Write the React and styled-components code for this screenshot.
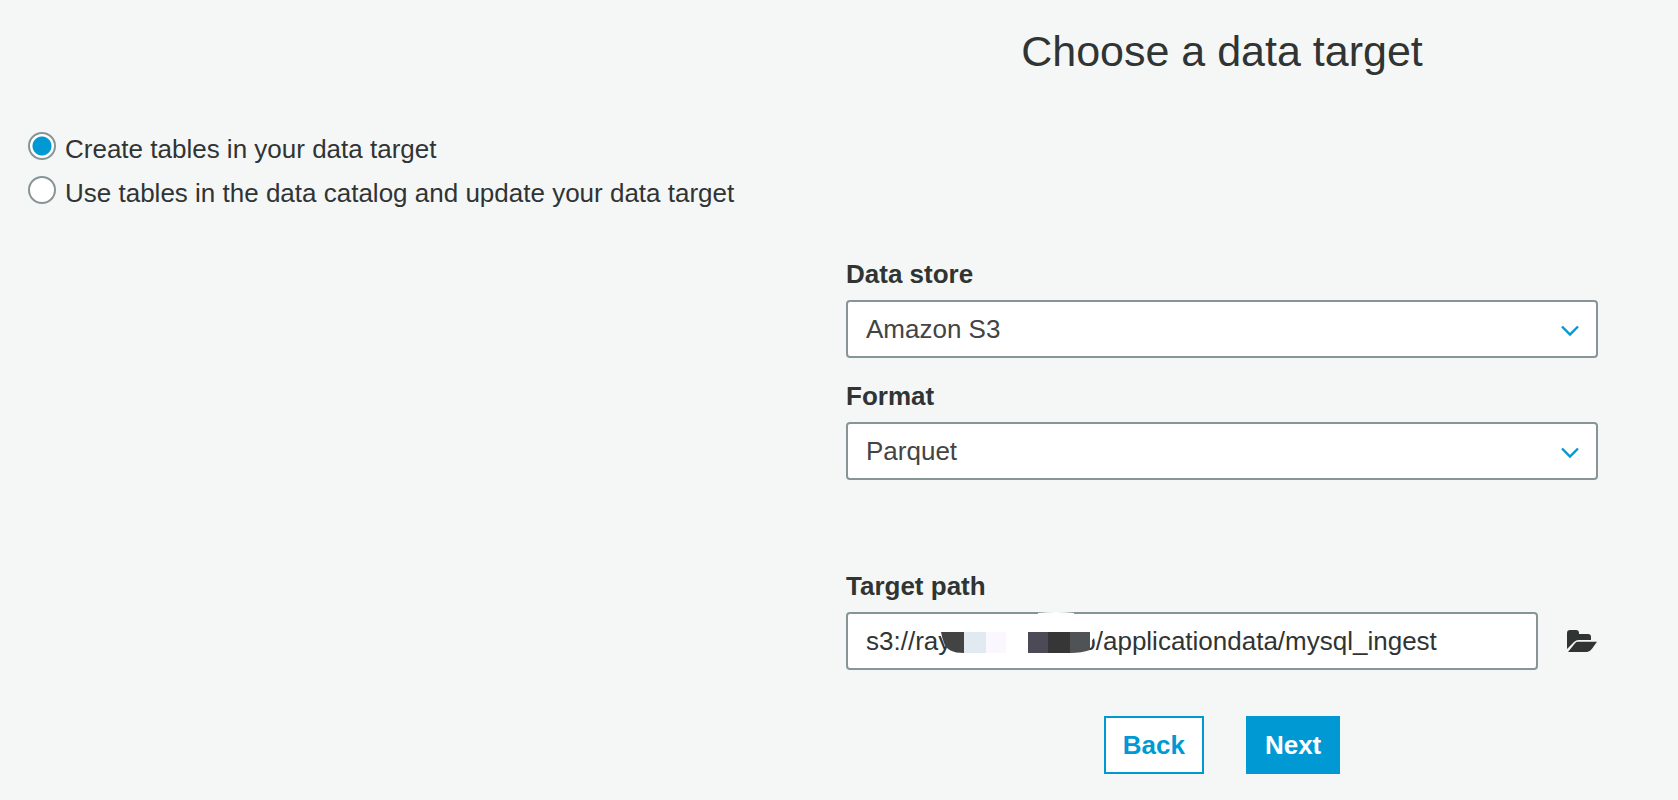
import React, { useState } from "react";
import styled, { createGlobalStyle, css } from "styled-components";

const GlobalStyle = createGlobalStyle`
  * { box-sizing: border-box; }
  body {
    margin: 0;
    background: #f5f7f7;
    color: #303433;
    font-family: "Liberation Sans", Arial, sans-serif;
    font-size: 26px;
    line-height: 32px;
  }
`;

const Page = styled.main`
  display: grid;
  grid-template-columns: minmax(0, 1fr) minmax(0, 1fr);
  column-gap: 80px;
  padding: 25px 80px 25px 14px;
`;

const Title = styled.h1`
  grid-column: 2;
  margin: 0;
  font-size: 43px;
  line-height: 52px;
  font-weight: 400;
  text-align: center;
`;

const Choices = styled.fieldset`
  grid-column: 1 / -1;
  margin: 50px 0 0;
  padding: 0 0 0 14px;
  border: 0;
  min-width: 0;
`;

const Choice = styled.label`
  display: flex;
  align-items: flex-start;
  gap: 9px;
  line-height: 44px;
`;

const Radio = styled.input`
  appearance: none;
  flex: none;
  width: 28px;
  height: 28px;
  margin: 5px 0 0;
  border: 2px solid #879596;
  border-radius: 50%;
  background: #fff;
  &:checked {
    background: radial-gradient(circle, #0099d4 9px, #fff 10px);
  }
`;

const Form = styled.form`
  grid-column: 2;
  display: flex;
  flex-direction: column;
  margin-top: 43px;
`;

const Field = styled.div`
  display: flex;
  flex-direction: column;
  gap: 10px;
  margin-bottom: ${(p) => (p.$spaced ? "90px" : "22px")};
`;

const Label = styled.label`
  font-weight: 700;
`;

const control = css`
  width: 100%;
  height: 58px;
  padding: 0 18px;
  border: 2px solid #879596;
  border-radius: 4px;
  background: #fff;
  font: inherit;
`;

const ControlWrap = styled.div`
  position: relative;
  flex: 1;
  min-width: 0;
  display: flex;
`;

const Select = styled.select`
  ${control}
  appearance: none;
  color: #444;
`;

const TextInput = styled.input`
  ${control}
  color: #303433;
`;

const Chevron = styled.svg`
  position: absolute;
  right: 18px;
  top: 24px;
  pointer-events: none;
`;

const Redaction = styled.svg`
  position: absolute;
  left: 94px;
  top: 0;
  pointer-events: none;
`;

const PathRow = styled.div`
  display: flex;
  align-items: center;
  gap: 28px;
`;

const IconButton = styled.button`
  display: flex;
  padding: 0;
  border: 0;
  background: none;
  color: #303433;
`;

const Actions = styled.div`
  display: flex;
  justify-content: center;
  gap: 42px;
  margin-top: 24px;
`;

const Button = styled.button`
  height: 58px;
  padding: 0 17px;
  border: 2px solid #0099d4;
  background: ${(p) => (p.$primary ? "#0099d4" : "#fff")};
  color: ${(p) => (p.$primary ? "#fff" : "#0099d4")};
  font: inherit;
  font-weight: 700;
`;

const SelectField = ({ id, label, option, spaced }) => (
  <Field $spaced={spaced}>
    <Label htmlFor={id}>{label}</Label>
    <ControlWrap>
      <Select id={id}>
        <option>{option}</option>
      </Select>
      <Chevron width="20" height="14" viewBox="0 0 20 14" aria-hidden="true">
        <path d="M2 2.500l8 8 8-8" fill="none" stroke="#0099d4" strokeWidth="2.4" />
      </Chevron>
    </ControlWrap>
  </Field>
);

const FolderIcon = () => (
  <svg width="32" height="24" viewBox="0 0 32 24" aria-hidden="true" fill="currentColor">
    <path d="M1 20V4q0-3 3-3h6q3 0 3 3v1h9q3 0 3 3v3H12.500q-2.500 0-4.500 2z" />
    <path d="M2 23l7-8.800q1.200-1.400 3-1.400H31l-5 7q-2.200 3.200-5 3.200z" />
  </svg>
);

const pathValue = "s3://ray" + "\u00a0".repeat(18) + "b/applicationdata/mysql_ingest";

export default function App() {
  const [mode, setMode] = useState("create");
  const [path, setPath] = useState(pathValue);
  return (
    <>
      <GlobalStyle />
      <Page>
        <Title>Choose a data target</Title>
        <Choices>
          <Choice>
            <Radio type="radio" name="mode" checked={mode === "create"} onChange={() => setMode("create")} />
            Create tables in your data target
          </Choice>
          <Choice>
            <Radio type="radio" name="mode" checked={mode === "catalog"} onChange={() => setMode("catalog")} />
            Use tables in the data catalog and update your data target
          </Choice>
        </Choices>
        <Form onSubmit={(e) => e.preventDefault()}>
          <SelectField id="store" label="Data store" option="Amazon S3" />
          <SelectField id="format" label="Format" option="Parquet" spaced />
          <Field>
            <Label htmlFor="path">Target path</Label>
            <PathRow>
              <ControlWrap>
                <TextInput id="path" value={path} onChange={(e) => setPath(e.target.value)} />
                <Redaction width="162" height="58" viewBox="0 0 162 58" aria-hidden="true">
                  <path d="M98 1q18-2 36 0v1H98z" fill="#fff" />
                  <path d="M10 8h144v18l-4 5v9H22Q6 38 1 24z" fill="#fff" />
                  <path d="M1 20h23v21q-17 0-20-10-2-5-3-11z" fill="#434343" />
                  <path d="M24 20h22v21H24z" fill="#e1e9f1" />
                  <path d="M46 20h20v21H46z" fill="#faf7ff" />
                  <path d="M88 20h20v21H88z" fill="#4b4a56" />
                  <path d="M108 20h22v21h-22z" fill="#363636" />
                  <path d="M130 20h20v18q-8 3-20 3z" fill="#505355" />
                </Redaction>
              </ControlWrap>
              <IconButton type="button" aria-label="Browse">
                <FolderIcon />
              </IconButton>
            </PathRow>
          </Field>
          <Actions>
            <Button type="button">Back</Button>
            <Button type="submit" $primary>Next</Button>
          </Actions>
        </Form>
      </Page>
    </>
  );
}
